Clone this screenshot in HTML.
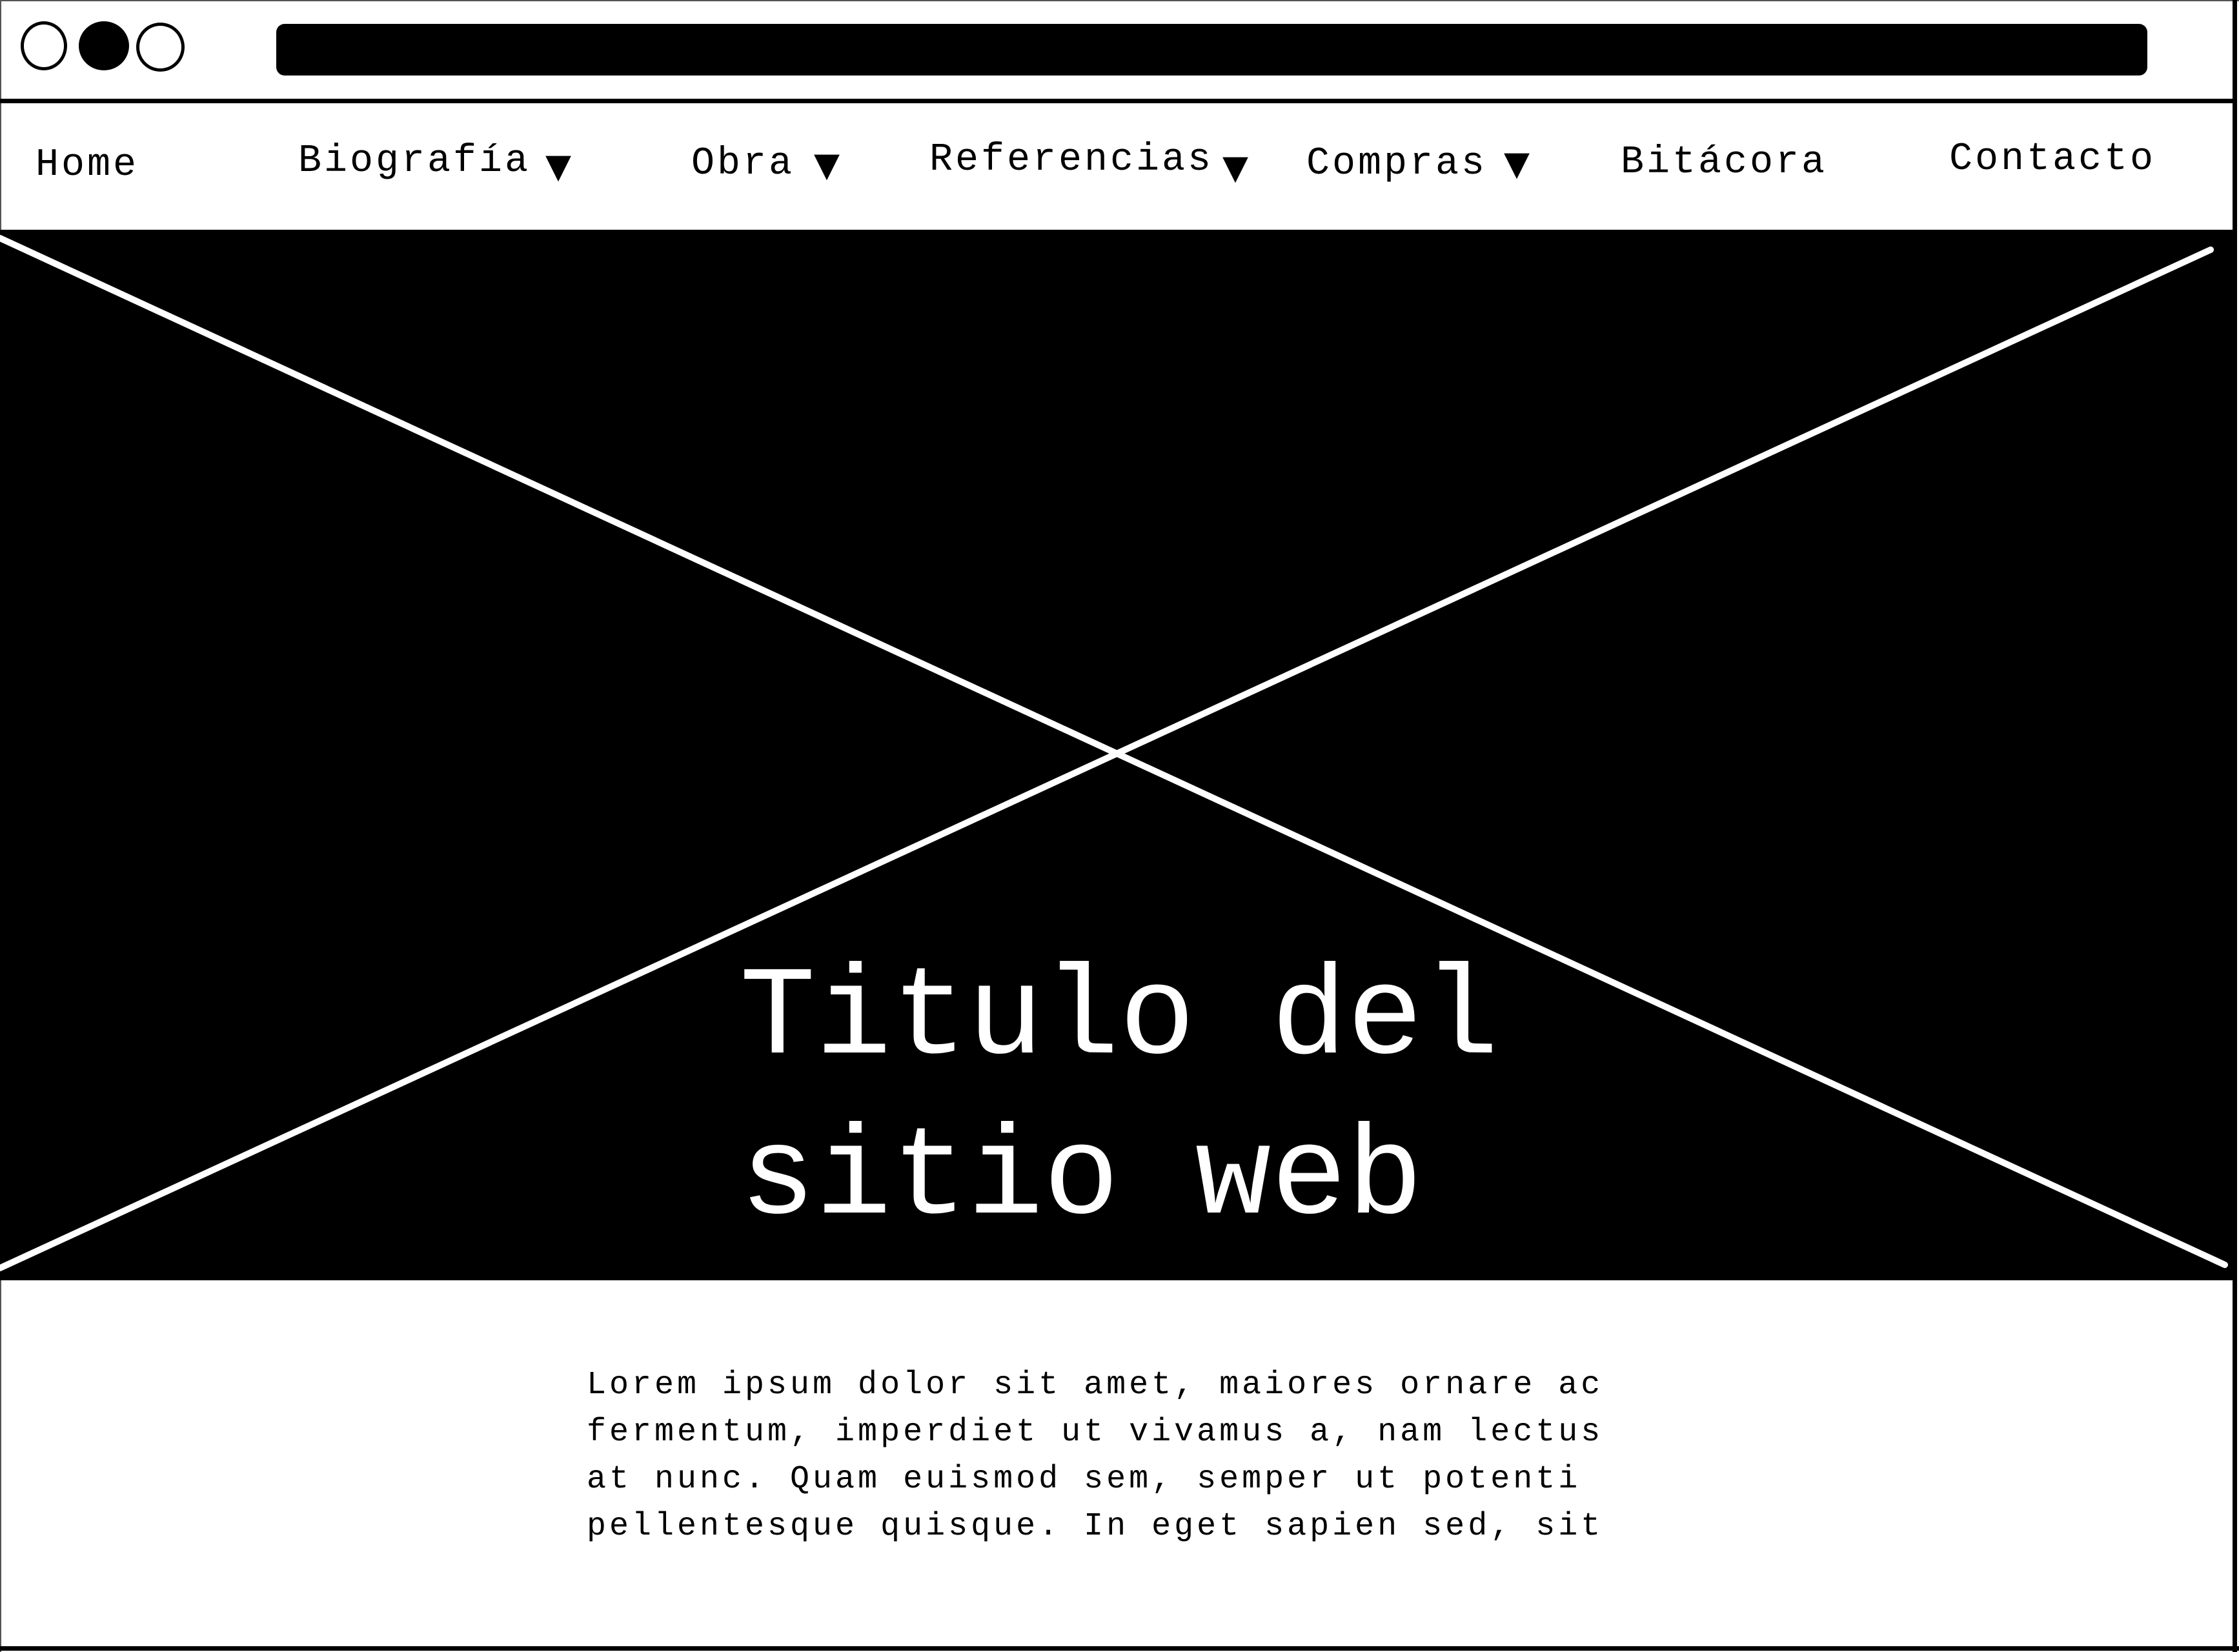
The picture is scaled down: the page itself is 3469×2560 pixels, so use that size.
<!DOCTYPE html>
<html><head><meta charset="utf-8"><style>
*{margin:0;padding:0;box-sizing:border-box}
body{width:3469px;height:2560px;background:#fff;position:relative;overflow:hidden;font-family:"Liberation Mono","DejaVu Sans Mono",monospace;color:#000}
.a{position:absolute;white-space:pre}
.nav{font-size:60px;letter-spacing:4px;line-height:1}
.tri{font-size:52px;line-height:1;font-family:"DejaVu Sans",sans-serif}
</style></head><body>
<div class="a" style="left:0;top:0;width:3469px;height:2px;background:#555"></div>
<div class="a" style="left:0;top:0;width:2px;height:2560px;background:#555"></div>
<div class="a" style="left:32px;top:33px;width:72px;height:76px;border:5px solid #000;border-radius:50%"></div>
<div class="a" style="left:122px;top:33px;width:78px;height:76px;background:#000;border-radius:50%"></div>
<div class="a" style="left:211px;top:35px;width:75px;height:76px;border:5px solid #000;border-radius:50%"></div>
<div class="a" style="left:428px;top:37px;width:2899px;height:80px;background:#000;border-radius:13px"></div>
<div class="a" style="left:0;top:153px;width:3466px;height:7px;background:#000"></div>
<div class="a" style="left:3459px;top:0;width:7px;height:2560px;background:#000"></div>
<div class="a" style="left:0;top:2551px;width:3469px;height:7px;background:#000"></div>

<div class="a nav" style="left:55px;top:226px">Home</div>
<div class="a nav" style="left:462px;top:220px">Biografía</div>
<div class="a tri" style="left:845px;top:232px">▼</div>
<div class="a nav" style="left:1071px;top:224px">Obra</div>
<div class="a tri" style="left:1261px;top:230px">▼</div>
<div class="a nav" style="left:1440px;top:218px">Referencias</div>
<div class="a tri" style="left:1894px;top:234px">▼</div>
<div class="a nav" style="left:2024px;top:224px">Compras</div>
<div class="a tri" style="left:2330px;top:228px">▼</div>
<div class="a nav" style="left:2511px;top:222px">Bitácora</div>
<div class="a nav" style="left:3020px;top:217px">Contacto</div>

<div class="a" style="left:0;top:356px;width:3459px;height:1628px;background:#000"></div>
<svg class="a" style="left:0;top:0" width="3469" height="2560">
<line x1="0" y1="369" x2="3447" y2="1960" stroke="#fff" stroke-width="10" stroke-linecap="round"/>
<line x1="3425" y1="387" x2="0" y2="1965" stroke="#fff" stroke-width="10" stroke-linecap="round"/>
</svg>
<div class="a" style="left:1146px;top:1455px;font-size:196px;line-height:248px;color:#fff">Titulo del
sitio web</div>
<div class="a" style="left:909px;top:2110px;font-size:50px;letter-spacing:5px;line-height:73px">Lorem ipsum dolor sit amet, maiores ornare ac
fermentum, imperdiet ut vivamus a, nam lectus
at nunc. Quam euismod sem, semper ut potenti
pellentesque quisque. In eget sapien sed, sit</div>
</body></html>
